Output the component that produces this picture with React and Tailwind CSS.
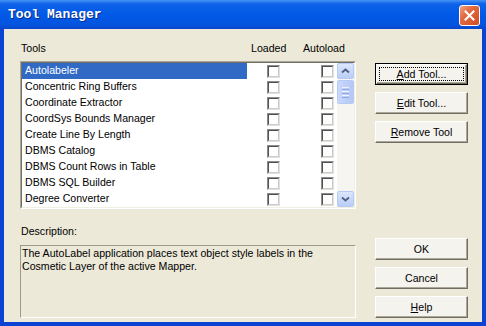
import React from 'react';

const tools = [
  'Autolabeler',
  'Concentric Ring Buffers',
  'Coordinate Extractor',
  'CoordSys Bounds Manager',
  'Create Line By Length',
  'DBMS Catalog',
  'DBMS Count Rows in Table',
  'DBMS SQL Builder',
  'Degree Converter',
];

const CheckBox = () => (
  <span className="block w-[13px] h-[13px] border border-t-[#8c8c8c] border-l-[#8c8c8c] border-b-[#e0e0e0] border-r-[#e0e0e0]">
    <span className="block w-full h-full border border-t-[#505050] border-l-[#505050] border-b-[#cfcbc2] border-r-[#cfcbc2] bg-white" />
  </span>
);

const Chevron = ({ down }) => (
  <svg width="9" height="6" viewBox="0 0 9 6">
    <path
      d={down ? 'M1 1.5 L4.5 4.5 L8 1.5' : 'M1 4.5 L4.5 1.5 L8 4.5'}
      fill="none"
      stroke="#4d6185"
      strokeWidth="1.8"
    />
  </svg>
);

const ScrollButton = ({ down }) => (
  <div className="h-[16px] flex items-center justify-center rounded-[2px] border border-[#b7caf5] bg-gradient-to-b from-[#dce6fd] to-[#b9cdf6]">
    <Chevron down={down} />
  </div>
);

const Button = ({ children, focused }) => (
  <div className={`h-[22px] w-[93px] ${focused ? 'border border-black' : ''}`}>
    <div className="relative h-full flex items-center justify-center bg-[#f4f3ee] border border-t-white border-l-white border-b-[#716f64] border-r-[#716f64] shadow-[inset_-1px_-1px_0_#aca899]">
      {focused && <span className="absolute inset-[2px] border border-dotted border-black" />}
      <span className="leading-[13px]">{children}</span>
    </div>
  </div>
);

export default function App() {
  return (
    <div className="w-[486px] h-[326px] flex flex-col bg-[#0b43d2] font-['Liberation_Sans',Arial,sans-serif] text-[10.6px] text-black overflow-hidden">
      {/* title bar */}
      <div className="h-[29px] flex items-center pl-[8px] pr-[6px] bg-[linear-gradient(to_bottom,#4592f6_0%,#0d62e8_14%,#0058e6_55%,#0455de_85%,#0a45cc_100%)]">
        <span className="font-['Liberation_Mono',monospace] font-bold text-[13px] text-white [text-shadow:1px_1px_0_#0a2a8c] mt-[1px]">
          Tool Manager
        </span>
        <div className="ml-auto mt-[1px] w-[21px] h-[21px] rounded-[3px] border border-white bg-[linear-gradient(135deg,#f2a486_0%,#e36b42_35%,#d24d22_100%)] flex items-center justify-center">
          <svg width="11" height="11" viewBox="0 0 11 11">
            <path d="M1.5 1.5 L9.5 9.5 M9.5 1.5 L1.5 9.5" stroke="white" strokeWidth="2" strokeLinecap="square" />
          </svg>
        </div>
      </div>

      {/* client area */}
      <div className="flex-1 mx-[4px] mb-[4px] bg-[#ece9d8] flex pt-[13px] pl-[16px] pb-[4px]">
        <div className="w-[336px] flex flex-col">
          <div className="h-[14px] flex items-center">
            <span className="w-[231px] pl-[1px]">Tools</span>
            <span className="w-[52px]">Loaded</span>
            <span>Autoload</span>
          </div>

          {/* list */}
          <div className="mt-[5px] h-[148px] border border-t-[#aca899] border-l-[#aca899] border-b-white border-r-white">
            <div className="h-full flex bg-white border border-t-[#716f64] border-l-[#716f64] border-b-[#f1efe2] border-r-[#f1efe2]">
              <div className="flex-1 flex flex-col">
                {tools.map((t, i) => (
                  <div key={t} className="h-[16px] flex items-center">
                    <span
                      className={`w-[225px] h-full flex items-center pl-[3px] ${
                        i === 0 ? 'bg-[#316ac5] text-white' : ''
                      }`}
                    >
                      {t}
                    </span>
                    <span className="ml-[20px]">
                      <CheckBox />
                    </span>
                    <span className="ml-[41px]">
                      <CheckBox />
                    </span>
                  </div>
                ))}
              </div>
              {/* scrollbar */}
              <div className="w-[17px] flex flex-col bg-[#f6f5f1]">
                <ScrollButton />
                <div className="h-[24px] mt-[1px] flex flex-col items-center justify-center gap-[1px] rounded-[2px] border border-[#b7caf5] bg-gradient-to-r from-[#c9d8fc] to-[#b4c8f4]">
                  <span className="block w-[7px] h-[1px] bg-[#eef3fe]" />
                  <span className="block w-[7px] h-[1px] bg-[#8fa9e0]" />
                  <span className="block w-[7px] h-[1px] bg-[#eef3fe]" />
                  <span className="block w-[7px] h-[1px] bg-[#8fa9e0]" />
                  <span className="block w-[7px] h-[1px] bg-[#eef3fe]" />
                  <span className="block w-[7px] h-[1px] bg-[#8fa9e0]" />
                </div>
                <div className="flex-1" />
                <ScrollButton down />
              </div>
            </div>
          </div>

          <div className="mt-[16px] h-[14px] flex items-center pl-[1px]">Description:</div>
          <div className="mt-[6px] flex-1 border border-t-[#9d9a8c] border-l-[#9d9a8c] border-b-white border-r-white pl-[1px] pt-[1px] leading-[13px]">
            The AutoLabel application places text object style labels in the
            <br />
            Cosmetic Layer of the active Mapper.
          </div>
        </div>

        {/* buttons */}
        <div className="ml-[19px] w-[93px] flex flex-col">
          <div className="mt-[21px] flex flex-col gap-[7px]">
            <Button focused>
              <u>A</u>dd Tool...
            </Button>
            <Button>
              <u>E</u>dit Tool...
            </Button>
            <Button>
              <u>R</u>emove Tool
            </Button>
          </div>
          <div className="mt-auto flex flex-col gap-[7px]">
            <Button>OK</Button>
            <Button>Cancel</Button>
            <Button>
              <u>H</u>elp
            </Button>
          </div>
        </div>
      </div>
    </div>
  );
}
